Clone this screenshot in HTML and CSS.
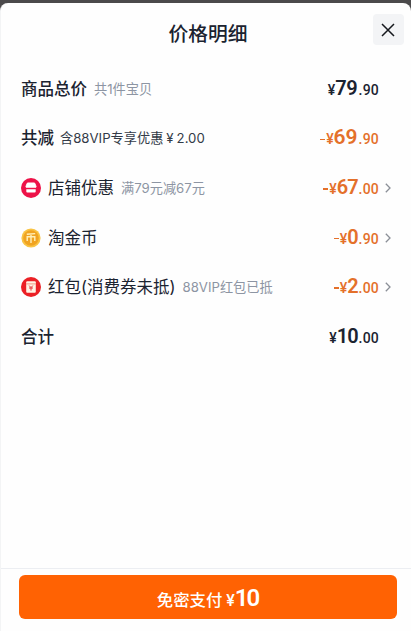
FILE: index.html
```html
<!DOCTYPE html>
<html lang="zh-CN">
<head>
  <meta charset="UTF-8" />
  <meta name="viewport" content="width=device-width, initial-scale=1.0"/>
  <title>价格明细</title>
  <link rel="stylesheet" href="styles.css">
</head>
<body>
  <div class="sheet">
    <header class="header">
      <h1>价格明细</h1>
      <button class="close" aria-label="关闭">
        <svg width="16" height="16" viewBox="0 0 16 16"><path d="M2 2l12 12M14 2L2 14" /></svg>
      </button>
    </header>

    <ul class="rows">
      <li class="row">
        <span class="label bold">商品总价</span>
        <span class="note">共1件宝贝</span>
        <span class="price total"><i>¥</i><b>79</b><em>.90</em></span>
      </li>
      <li class="row">
        <span class="label bold">共减</span>
        <span class="note dark">含88VIP专享优惠<span class="yen">¥</span>2.00</span>
        <span class="price minus saved"><s></s><i>¥</i><b>69</b><em>.90</em></span>
      </li>
      <li class="row">
        <svg class="icon" viewBox="0 0 20 20">
          <circle cx="10" cy="10" r="10" fill="#ed1248" />
          <path d="M6.4 5h7.2l1.4 3.2v1H5v-1z" fill="#fff" stroke="#fff" stroke-linejoin="round" />
          <path d="M5.3 11.2h9.4v2.3q0 1-1 1H6.3q-1 0-1-1z" fill="#fff" />
        </svg>
        <span class="label">店铺优惠</span>
        <span class="note">满79元减67元</span>
        <span class="price minus"><s></s><i>¥</i><b>67</b><em>.00</em></span>
        <svg class="arrow" viewBox="0 0 6 10"><path d="M.8 .8L5 5 .8 9.2" /></svg>
      </li>
      <li class="row">
        <svg class="icon" viewBox="0 0 20 20">
          <circle cx="10" cy="10" r="9.6" fill="#f9c444" />
          <circle cx="10" cy="10" r="7.8" fill="#f0a321" />
          <path d="M5.8 6.3l8.4-.7M6.2 13V8.7h7.6V13M10 6v9" fill="none" stroke="#fff0b8" stroke-width="1.4" />
        </svg>
        <span class="label">淘金币</span>
        <span class="price minus"><s></s><i>¥</i><b>0</b><em>.90</em></span>
        <svg class="arrow" viewBox="0 0 6 10"><path d="M.8 .8L5 5 .8 9.2" /></svg>
      </li>
      <li class="row">
        <svg class="icon" viewBox="0 0 20 20">
          <circle cx="10" cy="10" r="10" fill="#eb2025" />
          <rect x="5.2" y="4.2" width="9.6" height="11.6" rx="1" fill="#fff3e4" />
          <path d="M5.2 6.9h9.6" stroke="#f08a75" stroke-width=".9" />
          <path d="M8.2 8.6l1.8 2 1.8-2M8 11h4M10 10.6v3" fill="none" stroke="#e5393c" stroke-width="1" />
        </svg>
        <span class="label">红包(消费券未抵)</span>
        <span class="note">88VIP红包已抵</span>
        <span class="price minus"><s></s><i>¥</i><b>2</b><em>.00</em></span>
        <svg class="arrow" viewBox="0 0 6 10"><path d="M.8 .8L5 5 .8 9.2" /></svg>
      </li>
      <li class="row">
        <span class="label bold">合计</span>
        <span class="price"><i>¥</i><b>10</b><em>.00</em></span>
      </li>
    </ul>

    <footer class="footer">
      <button class="pay"><span>免密支付</span><i>¥</i><b>10</b></button>
    </footer>
  </div>
</body>
</html>
```
FILE: styles.css
```css
* {
  box-sizing: border-box;
}
body {
  margin: 0;
  height: 631px;
  padding-top: 3px;
  background: #4b4a4b;
  font-family: Inter, "Noto Sans CJK SC", sans-serif;
  color: #1b2330;
  overflow: hidden;
}
button {
  border: 0;
  padding: 0;
  font-family: inherit;
}
.sheet {
  display: flex;
  flex-direction: column;
  height: 628px;
  background: #fefefe;
  border-left: 1px solid #f3f4f5;
  border-radius: 8px 8px 0 0;
}
.header {
  display: grid;
  grid-template-columns: 1fr auto 1fr;
  align-items: center;
  height: 61px;
  padding: 0 7px 0 11px;
}
h1 {
  grid-column: 2;
  margin: 0;
  font-size: 19.8px;
  font-weight: 500;
  line-height: 28px;
}
.close {
  display: flex;
  align-items: center;
  justify-content: center;
  justify-self: end;
  width: 31px;
  height: 31px;
  margin-bottom: 8px;
  padding-right: 1px;
  background: #f3f4f6;
  border-radius: 4px;
}
.close path {
  fill: none;
  stroke: #15181d;
  stroke-width: 1.5;
}
.rows {
  flex: 1;
  margin: 0;
  padding: 0 20px;
  list-style: none;
}
.row {
  display: flex;
  align-items: center;
  height: 49.6px;
  padding-right: 11px;
  white-space: nowrap;
}
.icon {
  width: 20px;
  height: 20px;
  margin-right: 7px;
}
.label {
  font-size: 16.5px;
  line-height: 24px;
}
.bold {
  font-weight: 500;
}
.note {
  margin-left: 7px;
  font-size: 13.2px;
  line-height: 20px;
  color: #8d95a3;
}
.dark {
  margin-left: 6px;
  color: #333b48;
}
.yen {
  margin: 0 3px;
}
.price {
  display: flex;
  align-items: baseline;
  margin: 0 1px 0 auto;
  font-family: Roboto, sans-serif;
  font-weight: 500;
  line-height: 24px;
}
.price i,
.price em {
  font-style: normal;
}
.price i {
  font-size: 14px;
}
.price b {
  font-size: 20px;
  font-weight: 600;
  letter-spacing: -1px;
}
.price em {
  margin-left: 1px;
  font-size: 14px;
  letter-spacing: .2px;
}
.total b {
  letter-spacing: -.2px;
}
.minus {
  color: #e4702a;
}
.saved b {
  font-size: 21px;
  letter-spacing: 0;
}
/* minus sign */
.minus s {
  align-self: center;
  flex: none;
  width: 5px;
  height: 1.5px;
  margin: 2px 1px 0 0;
  background: #e4702a;
}
.arrow {
  width: 6px;
  height: 10px;
  margin: 0 -11px 0 5px;
}
.arrow path {
  fill: none;
  stroke: #8b8f97;
  stroke-width: 1.3;
}
.footer {
  height: 63px;
  padding: 6px 14px 0 18px;
  border-top: 1px solid #eceef2;
}
.pay {
  display: flex;
  align-items: baseline;
  justify-content: center;
  width: 100%;
  height: 44px;
  padding-right: 1px;
  background: #ff6203;
  border-radius: 6px;
  color: #fff;
  font-size: 16.4px;
  font-weight: 500;
  line-height: 46px;
}
.pay i,
.pay b {
  font-family: Roboto, sans-serif;
  font-style: normal;
  font-weight: 600;
}
.pay i {
  margin-left: 4px;
  font-size: 16px;
  font-weight: 500;
}
.pay b {
  font-size: 24px;
  letter-spacing: -2px;
}
```
